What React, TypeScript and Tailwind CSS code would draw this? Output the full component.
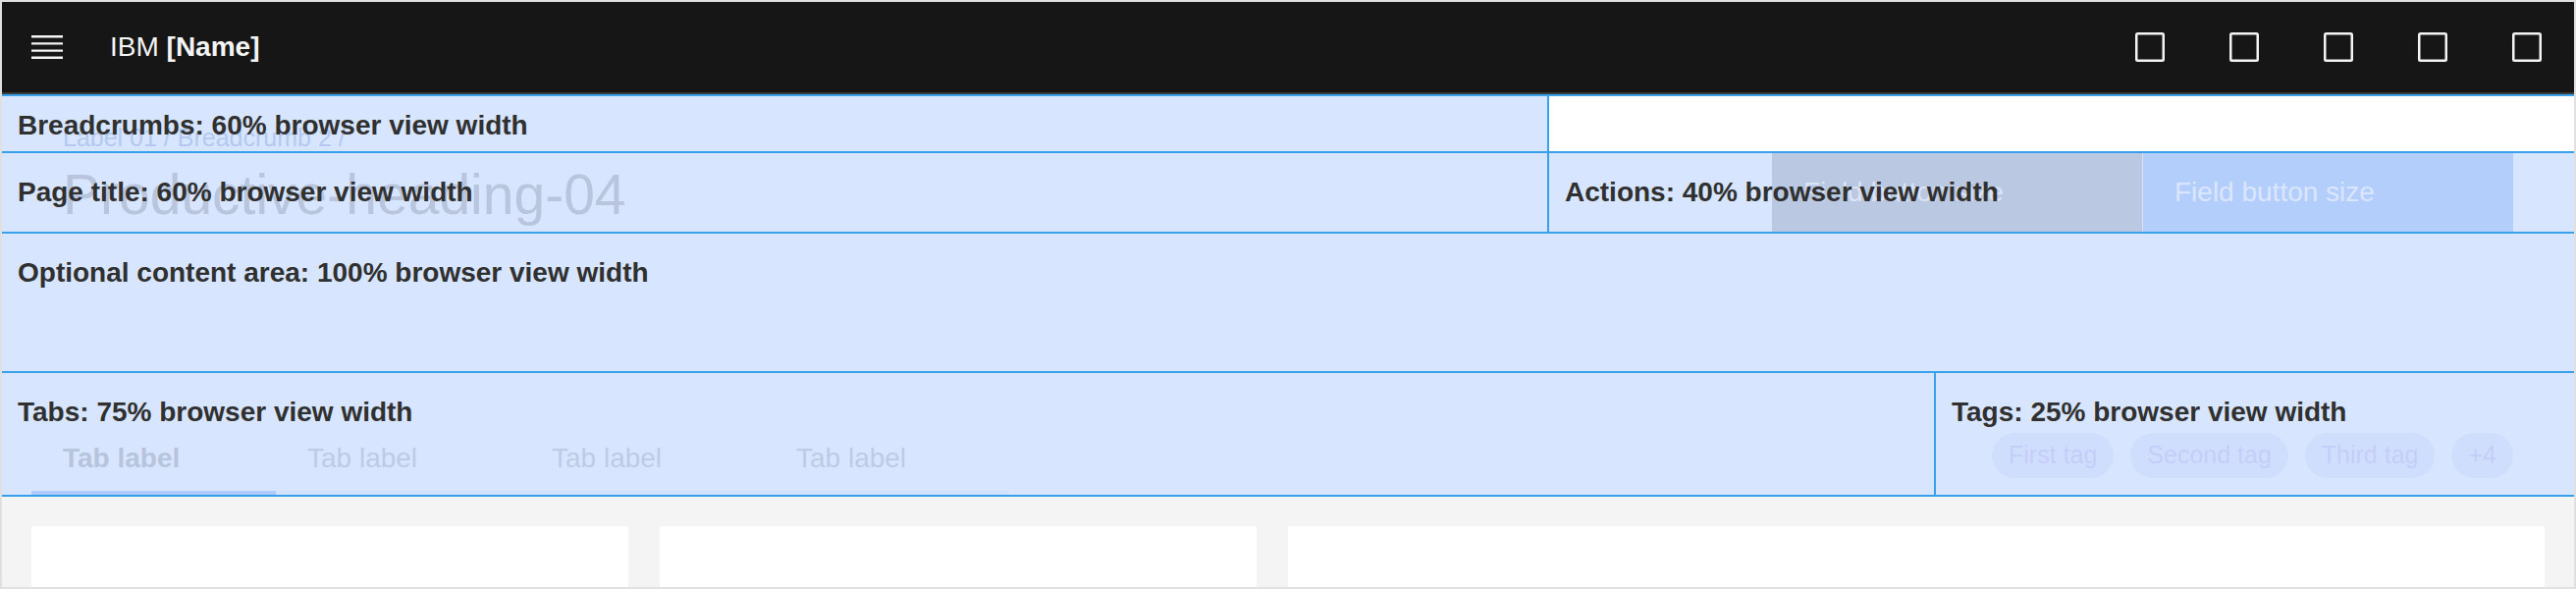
import React from "react";

const blue = "border-[#38a1e9]";

function MenuIcon() {
  return (
    <svg width="40" height="40" viewBox="0 0 20 20" fill="#f4f4f4">
      <path d="M2 14.8H18V16H2zM2 11.2H18V12.4H2zM2 7.6H18V8.8H2zM2 4H18V5.2H2z" />
    </svg>
  );
}

function SquareIcon() {
  return (
    <svg width="40" height="40" viewBox="0 0 32 32" fill="#f4f4f4">
      <path d="M26,4H6A2,2,0,0,0,4,6V26a2,2,0,0,0,2,2H26a2,2,0,0,0,2-2V6A2,2,0,0,0,26,4ZM6,26V6H26V26Z" />
    </svg>
  );
}

function Label({ children, top = "top-[26px]" }: { children: React.ReactNode; top?: string }) {
  return (
    <span
      className={`absolute left-[16px] ${top} text-[28px] leading-[28px] font-bold text-[#303030] whitespace-nowrap`}
    >
      {children}
    </span>
  );
}

const tabs = ["Tab label", "Tab label", "Tab label", "Tab label"];
const tags = ["First tag", "Second tag", "Third tag", "+4"];

export default function App() {
  return (
    <div className="w-[2624px] h-[600px] border-2 border-[#e0e0e0] overflow-hidden flex flex-col bg-white font-['Liberation_Sans',Arial,sans-serif]">
      {/* HEADER */}
      <header className="h-[94px] shrink-0 bg-[#161616] border-b-2 border-[#393939] flex items-center">
        <button className="w-[92px] h-full flex items-center justify-center">
          <MenuIcon />
        </button>
        <a className="ml-[18px] text-[28px] leading-[28px] text-[#f4f4f4] whitespace-nowrap">
          IBM <span className="font-bold">[Name]</span>
        </a>
        <div className="ml-auto flex h-full">
          {[0, 1, 2, 3, 4].map((i) => (
            <button key={i} className="w-[96px] h-full flex items-center justify-center">
              <SquareIcon />
            </button>
          ))}
        </div>
      </header>

      {/* PAGE HEADER ANNOTATIONS */}
      <div className={`shrink-0 border-t-2 ${blue}`}>
        {/* breadcrumbs */}
        <div className={`flex h-[58px] border-b-2 ${blue}`}>
          <div className={`relative w-[1576px] bg-[#d7e6fe] border-r-2 ${blue} overflow-hidden pl-[62px] pt-[30px]`}>
            <div className="text-[25px] leading-[25px] text-[#b3c9f0] whitespace-nowrap">
              Label 01 / Breadcrumb 2 /
            </div>
            <Label top="top-[16px]">Breadcrumbs: 60% browser view width</Label>
          </div>
          <div className="flex-1 bg-white" />
        </div>

        {/* title + actions */}
        <div className={`flex h-[82px] border-b-2 ${blue}`}>
          <div className={`relative w-[1576px] bg-[#d7e6fe] border-r-2 ${blue} overflow-hidden pl-[62px] pt-[14px]`}>
            <h1 className="text-[57px] leading-[56px] font-light text-[#b8c5dc] whitespace-nowrap">
              Productive-heading-04
            </h1>
            <Label>Page title: 60% browser view width</Label>
          </div>
          <div className="relative flex-1 bg-[#d7e6fe] flex justify-end pr-[62px]">
            <div className="flex gap-px bg-[#d9e2f5]">
              <div className="w-[377px] h-full bg-[#bac8e2] pl-[32px] pt-[26px] text-[28px] leading-[28px] text-[#dbe4f6]">
                Field button size
              </div>
              <div className="w-[377px] h-full bg-[#b3cefb] pl-[32px] pt-[26px] text-[28px] leading-[28px] text-[#dbe6fd]">
                Field button size
              </div>
            </div>
            <Label>Actions: 40% browser view width</Label>
          </div>
        </div>

        {/* optional content */}
        <div className={`relative h-[142px] bg-[#d7e6fe] border-b-2 ${blue}`}>
          <Label>Optional content area: 100% browser view width</Label>
        </div>

        {/* tabs + tags */}
        <div className={`flex h-[126px] border-b-2 ${blue}`}>
          <div className={`relative w-[1970px] bg-[#d7e6fe] border-r-2 ${blue} flex items-end pl-[30px]`}>
            {tabs.map((t, i) => (
              <div
                key={i}
                className={`w-[249px] h-[80px] pl-[32px] pt-[29px] text-[28px] leading-[28px] border-b-4 whitespace-nowrap ${
                  i === 0
                    ? "border-[#aecbfb] font-bold text-[#b7c4dc]"
                    : "border-[#d2e1fd] text-[#bdcbe5]"
                }`}
              >
                {t}
              </div>
            ))}
            <Label>Tabs: 75% browser view width</Label>
          </div>
          <div className="relative flex-1 bg-[#d7e6fe] flex justify-end items-end gap-[17px] pr-[62px] pb-[17px]">
            {tags.map((t) => (
              <span
                key={t}
                className="h-[46px] px-[17px] rounded-full bg-[#d0defd] text-[25px] text-[#c5cef8] flex items-center whitespace-nowrap"
              >
                {t}
              </span>
            ))}
            <Label>Tags: 25% browser view width</Label>
          </div>
        </div>
      </div>

      {/* CONTENT */}
      <main className="flex-1 bg-[#f4f4f4] px-[30px] pt-[30px] grid grid-cols-[608px_608px_1fr] gap-8 min-h-0">
        <div className="bg-white" />
        <div className="bg-white" />
        <div className="bg-white" />
      </main>
    </div>
  );
}
